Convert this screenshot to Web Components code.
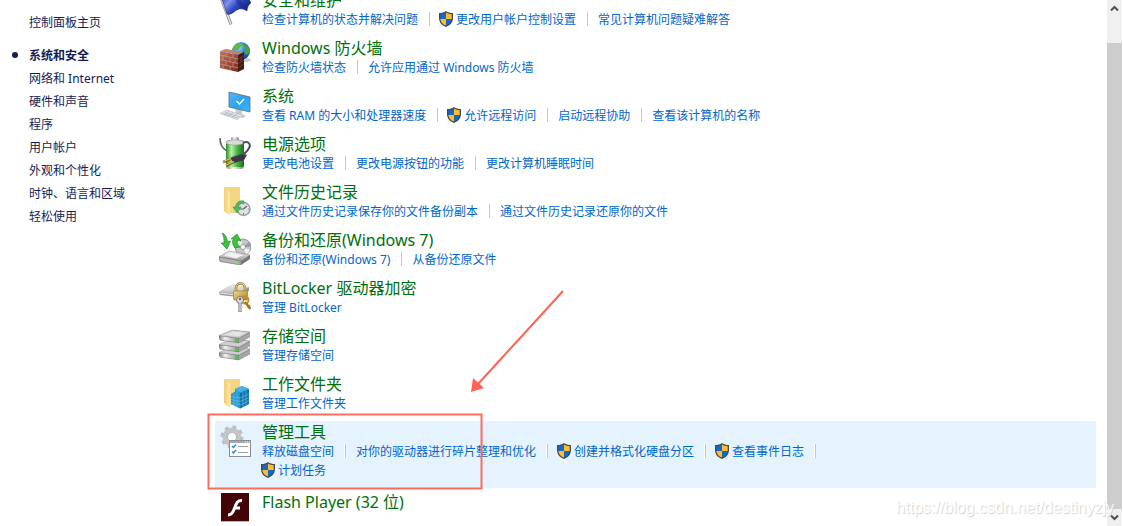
<!DOCTYPE html>
<html lang="zh-CN">
<head>
<meta charset="utf-8">
<title>系统和安全</title>
<style>
  html, body {
    height: 100%;
    margin: 0;
  }

  body {
    background: #fff;
    font-family: "Noto Sans", "Noto Sans CJK SC", sans-serif;
    font-size: 12px;
    overflow: hidden;
  }
</style>
</head>
<body>
<control-panel>
  <side-nav slot="nav">
    <nav-item>控制面板主页</nav-item>
    <nav-item slot="items" current>系统和安全</nav-item>
    <nav-item slot="items">网络和 Internet</nav-item>
    <nav-item slot="items">硬件和声音</nav-item>
    <nav-item slot="items">程序</nav-item>
    <nav-item slot="items">用户帐户</nav-item>
    <nav-item slot="items">外观和个性化</nav-item>
    <nav-item slot="items">时钟、语言和区域</nav-item>
    <nav-item slot="items">轻松使用</nav-item>
  </side-nav>

  <panel-category icon="flag">
    <span slot="heading">安全和维护</span>
    <task-link>检查计算机的状态并解决问题</task-link>
    <task-link shield>更改用户帐户控制设置</task-link>
    <task-link>常见计算机问题疑难解答</task-link>
  </panel-category>
  <panel-category icon="firewall">
    <span slot="heading">Windows 防火墙</span>
    <task-link>检查防火墙状态</task-link>
    <task-link>允许应用通过 Windows 防火墙</task-link>
  </panel-category>
  <panel-category icon="system">
    <span slot="heading">系统</span>
    <task-link>查看 RAM 的大小和处理器速度</task-link>
    <task-link shield>允许远程访问</task-link>
    <task-link>启动远程协助</task-link>
    <task-link>查看该计算机的名称</task-link>
  </panel-category>
  <panel-category icon="power">
    <span slot="heading">电源选项</span>
    <task-link>更改电池设置</task-link>
    <task-link>更改电源按钮的功能</task-link>
    <task-link>更改计算机睡眠时间</task-link>
  </panel-category>
  <panel-category icon="history">
    <span slot="heading">文件历史记录</span>
    <task-link>通过文件历史记录保存你的文件备份副本</task-link>
    <task-link>通过文件历史记录还原你的文件</task-link>
  </panel-category>
  <panel-category icon="backup">
    <span slot="heading">备份和还原(Windows 7)</span>
    <task-link>备份和还原(Windows 7)</task-link>
    <task-link>从备份还原文件</task-link>
  </panel-category>
  <panel-category icon="bitlocker">
    <span slot="heading">BitLocker 驱动器加密</span>
    <task-link>管理 BitLocker</task-link>
  </panel-category>
  <panel-category icon="storage">
    <span slot="heading">存储空间</span>
    <task-link>管理存储空间</task-link>
  </panel-category>
  <panel-category icon="work">
    <span slot="heading">工作文件夹</span>
    <task-link>管理工作文件夹</task-link>
  </panel-category>
  <panel-category icon="tools" active>
    <span slot="heading">管理工具</span>
    <task-link>释放磁盘空间</task-link>
    <task-link>对你的驱动器进行碎片整理和优化</task-link>
    <task-link shield>创建并格式化硬盘分区</task-link>
    <task-link shield>查看事件日志</task-link>
    <task-link shield>计划任务</task-link>
  </panel-category>
  <panel-category icon="flash" compact>
    <span slot="heading">Flash Player (32 位)</span>
  </panel-category>

  <scroll-bar slot="scroll"></scroll-bar>
  <callout-mark slot="overlay"></callout-mark>
  <water-mark slot="overlay">https://blog.csdn.net/destinyzjy</water-mark>
</control-panel>

<script>
// Small helper: open shadow root filled with the given markup
function attach(host, html) {
  const template = document.createElement("template");
  template.innerHTML = html;
  host.attachShadow({ mode: "open" }).appendChild(template.content.cloneNode(true));
}

const ICONS = {
  flag: `
    <defs>
      <linearGradient id="g" x1="0" x2="1" y1="0" y2="0.6">
        <stop offset="0" stop-color="#2a3aa8"/><stop offset=".35" stop-color="#7d92ee"/>
        <stop offset=".6" stop-color="#3448c2"/><stop offset="1" stop-color="#16227c"/>
      </linearGradient>
    </defs>
    <path d="M1 2 L12 31.500" stroke="#8c8c8c" stroke-width="3"/>
    <path d="M1 2 L12 31.500" stroke="#e4e4e4" stroke-width="1.400"/>
    <path d="M2 3 C9 -1 14 7 22 4 C26 3 29 4 29 5 L32 10 C30 11 28 14 28 18 C23 14 18 16 15 19 C12 21 10 22 8 21 Z" fill="url(#g)" stroke="#1b2782" stroke-width=".6"/>
    <path d="M16 6 C18 10 20 13 21 15 C24 15 25 16 27 17 C27 14 28 12 29 11 C24 11 22 9 20 5 Z" fill="#1b2a92" opacity=".5"/>`,
  firewall: `
    <defs>
      <radialGradient id="g" cx=".35" cy=".3" r=".8">
        <stop offset="0" stop-color="#b8e6ff"/><stop offset=".45" stop-color="#2e86dc"/><stop offset="1" stop-color="#0a3692"/>
      </radialGradient>
      <linearGradient id="b" x1="0" x2="1" y1="0" y2="1">
        <stop offset="0" stop-color="#c07560"/><stop offset="1" stop-color="#802a1b"/>
      </linearGradient>
    </defs>
    <ellipse cx="25" cy="19" rx="7" ry="2" fill="#ccc"/>
    <circle cx="22" cy="10" r="9" fill="url(#g)"/>
    <path d="M15 5 C17 2 21 1 24 3 C23 6 20 6 20 9 C17 9 14 9 13.500 8 Z" fill="#5cb848"/>
    <path d="M26 3 C29 5 31 8 31 11 C29 14 27 15 26 12 C25 10 27 8 25 6 Z" fill="#45a53a"/>
    <path d="M1 10 L7 8 L25 11 L19 14 Z" fill="#b98578"/>
    <path d="M1 10 L19 14 V31 L1 27 Z" fill="url(#b)"/>
    <path d="M19 14 L25 11 V28 L19 31 Z" fill="#4a1a14"/>
    <path d="M1 14 L19 18 M1 18.500 L19 22.500 M1 23 L19 27 M7 11.500 V15.500 M14 13 V17 M4 15 V19 M11 16.500 V20.500 M16 18 V22 M7 20 V24 M14 21.500 V25.500 M4 24 V28 M11 25 V29" stroke="#c99b8f" stroke-width=".7"/>
    <path d="M19 18 L25 15 M19 22.500 L25 19 M19 27 L25 23 M22 16.500 V20.500" stroke="#7b463e" stroke-width=".6"/>`,
  system: `
    <defs>
      <linearGradient id="g" x1="0" x2="1" y1="0" y2="1">
        <stop offset="0" stop-color="#58b8f4"/><stop offset=".5" stop-color="#2da3ee"/><stop offset="1" stop-color="#3db4fc"/>
      </linearGradient>
    </defs>
    <path d="M16 19 L23 21 V25 L27 27 L24 29 L13 25.500 L17 24 Z" fill="#c5cbd0"/>
    <path d="M10 3 L31 8 V23 L10 18 Z" fill="url(#g)" stroke="#5b6b77" stroke-width=".8"/>
    <path d="M17.500 12 L20.500 15 L25 10" fill="none" stroke="#fff" stroke-width="1.500"/>
    <path d="M1 24.500 L8 21 L24 26.500 L18 30.500 Z" fill="#e3e6e9" stroke="#afb5ba" stroke-width=".6"/>
    <path d="M4 24.500 L19 29 M6 23.300 L21 28 M5 26 L10 22 M9 27 L14 23.500 M13 28.500 L18 25" stroke="#a5abb0" stroke-width=".6"/>`,
  power: `
    <defs>
      <linearGradient id="g" x1="0" x2="1" y1="0" y2="0">
        <stop offset="0" stop-color="#2e8a2c"/><stop offset=".3" stop-color="#b5f0a4"/>
        <stop offset=".6" stop-color="#4bbb42"/><stop offset="1" stop-color="#196a1e"/>
      </linearGradient>
      <linearGradient id="m" x1="0" x2="1" y1="0" y2="0">
        <stop offset="0" stop-color="#888"/><stop offset=".4" stop-color="#fafafa"/><stop offset="1" stop-color="#858585"/>
      </linearGradient>
    </defs>
    <path d="M1 1 C1 7 4 12 8 14" fill="none" stroke="#5b6072" stroke-width="1.600"/>
    <rect x="12" y="0" width="8" height="5" rx="2" fill="url(#m)"/>
    <rect x="7" y="3" width="18" height="29" rx="3" fill="url(#m)"/>
    <rect x="7" y="6" width="18" height="24" rx="2" fill="url(#g)"/>
    <ellipse cx="16" cy="5.500" rx="9" ry="2.600" fill="#d8dcd8" stroke="#979d97" stroke-width=".6"/>
    <path d="M24 6 C30 3 32 8 30 11 C29 14 26 16 24 18" fill="none" stroke="#464c60" stroke-width="2"/>
    <path d="M11 21 L23 16 L28 18 L25 23 L15 26 Z" fill="#363940"/>
    <path d="M12 20.500 L23 16.500 L27 18" fill="none" stroke="#777c86" stroke-width=".8"/>
    <path d="M12 22 L4 25 M15 25 L7 28.500" stroke="#8a611b" stroke-width="2.600"/>
    <path d="M12 21.500 L4 24.500 M15 24.500 L7 28" stroke="#e7c777" stroke-width="1.200"/>`,
  history: `
    <defs>
      <linearGradient id="f" x1="0" x2="1" y1="0" y2="0">
        <stop offset="0" stop-color="#f3ce74"/><stop offset="1" stop-color="#fde9ae"/>
      </linearGradient>
    </defs>
    <path d="M5 2 H21 V28 H9 L5 25 Z" fill="#f4d685"/>
    <path d="M11 7 V31 L5 26 V2 Z" fill="url(#f)"/>
    <circle cx="24.500" cy="24" r="6.500" fill="#dfe1e2" stroke="#9a9ea0" stroke-width="1.400"/>
    <path d="M24.500 24 L28 21 M24.500 24 H20.500" stroke="#606468" stroke-width="1.200"/>
    <path d="M24.500 18.500 V19.500 M24.500 28 V29.500 M29 24 H30" stroke="#777"/>
    <path d="M25 16 C20 15 17 18 16.500 22 H14 L18 28 L22 22 H19.500 C20 19.500 21.500 18 25 18 Z" fill="#4fbb5c" stroke="#24883a" stroke-width=".5"/>`,
  backup: `
    <defs>
      <linearGradient id="g" x1="0" x2="0" y1="0" y2="1">
        <stop offset="0" stop-color="#f5f5f5"/><stop offset="1" stop-color="#9a9a9a"/>
      </linearGradient>
    </defs>
    <circle cx="24" cy="14" r="8" fill="#c4c4c9" stroke="#85858a" stroke-width=".8"/>
    <path d="M24 14 L17 10 A8 8 0 0 1 22 6.500 Z M24 14 L31 17 A8 8 0 0 1 27 21.500 Z" fill="#f2f2f2"/>
    <path d="M24 14 L30 9 A8 8 0 0 1 32 14 Z" fill="#9b9da4"/>
    <circle cx="24" cy="14" r="2.500" fill="#fff" stroke="#888" stroke-width=".8"/>
    <path d="M0 24 L10 18 L31 22 L22 28 Z" fill="url(#g)" stroke="#8a8a8a" stroke-width=".6"/>
    <path d="M0 24 L22 28 V32 L1 28.500 Z" fill="#b5b5b5" stroke="#666" stroke-width=".6"/>
    <path d="M22 28 L31 22 V26 L22 32 Z" fill="#777"/>
    <path d="M5 22.500 L12 19.500 L24 22 L17 25.500 Z" fill="#f2f2f2"/>
    <circle cx="20" cy="29.500" r="1" fill="#44dc30"/>
    <path d="M3 0 C6 1 8 4 8.500 9 L11.500 8 L8 16 L2 10 L5 10 C5 6 5 3 3 0 Z" fill="#3bc43a" stroke="#137f1c" stroke-width=".6"/>
    <path d="M16 15 C13 11 13 8 14.500 5.500 L12 6 L18 1 L22 8 L19 7 C17.500 9 18 12 21 14 Z" fill="#3bc43a" stroke="#137f1c" stroke-width=".6"/>`,
  bitlocker: `
    <defs>
      <linearGradient id="g" x1="0" x2="0" y1="0" y2="1">
        <stop offset="0" stop-color="#ededed"/><stop offset="1" stop-color="#b9b9b9"/>
      </linearGradient>
      <linearGradient id="k" x1="0" x2="1" y1="0" y2="1">
        <stop offset="0" stop-color="#f4dd8c"/><stop offset="1" stop-color="#b07c16"/>
      </linearGradient>
    </defs>
    <path d="M0 11 L12 4 L30 6 V10 L19 16 L1 14 Z" fill="#969696"/>
    <path d="M0 11 L12 4 L30 6 L19 13 Z" fill="url(#g)"/>
    <path d="M1 12 L17 14" stroke="#efefef"/>
    <path d="M17 11 V7 C17 1 26 1 26 7 V11" fill="none" stroke="#8f6a1d" stroke-width="2.600"/>
    <path d="M17 11 V7 C17 1 26 1 26 7 V11" fill="none" stroke="#eed98f" stroke-width="1.200"/>
    <rect x="14.500" y="10" width="14" height="9" rx="1" fill="url(#k)" stroke="#93701e" stroke-width=".6"/>
    <circle cx="26" cy="19" r="3.500" fill="none" stroke="#c49428" stroke-width="2"/>
    <path d="M26 21 L31.500 28 M28.500 26.500 L31 24.500" stroke="#a77618" stroke-width="2.400"/>
    <circle cx="21" cy="19" r="3.500" fill="#ddd" stroke="#777"/>
    <circle cx="21" cy="18" r="1.200" fill="#666"/>
    <path d="M21 22 V31" stroke="#777" stroke-width="3.200"/>
    <path d="M21 22 V30.500 M22 26 H24 M22 29 H23.500" stroke="#dadada" stroke-width="1.400"/>`,
  storage: `
    <defs>
      <linearGradient id="g" x1="0" x2="1" y1="0" y2="0">
        <stop offset="0" stop-color="#7d7d7d"/><stop offset=".3" stop-color="#f2f2f2"/><stop offset="1" stop-color="#8c8c8c"/>
      </linearGradient>
      <g id="d">
        <path d="M0 6 L13 0 L31 2 V7 L20 13 L1 10 Z" fill="#686868"/>
        <path d="M0 5.500 L20 8.500 V13 L1 10 Z" fill="url(#g)" stroke="#7b7b7b" stroke-width=".5"/>
        <path d="M0 5.500 L13 0 L31 2 L20 8 Z" fill="#d0d0d0" stroke="#999" stroke-width=".5"/>
        <path d="M20 8.500 L31 2.500 V7 L20 13 Z" fill="#a6a6a6"/>
        <rect x="16" y="9" width="2" height="3" fill="#3fd22e"/>
      </g>
    </defs>
    <use href="#d" y="18"/>
    <use href="#d" y="10"/>
    <use href="#d" y="1"/>
    <path d="M6 6 L14 2.500 L26 4 L19 7 Z" fill="#e6e6e6"/>`,
  work: `
    <defs>
      <linearGradient id="f" x1="0" x2="1" y1="0" y2="0">
        <stop offset="0" stop-color="#f2cc6f"/><stop offset="1" stop-color="#fde9ae"/>
      </linearGradient>
    </defs>
    <path d="M5 2 H21 V28 H9 L5 25 Z" fill="#f5d684"/>
    <path d="M11 7 V31 L5 26 V2 Z" fill="url(#f)"/>
    <path d="M12 17 L16 14.500 V12 L23 9 L30 12 V27 L21 31.500 L12 27 Z" fill="#2397d4"/>
    <path d="M21 16 L30 12 V27 L21 31.500 Z" fill="#1172ad"/>
    <path d="M16 12 L23 9 L30 12 L21 15.500 Z" fill="#4bb0e2"/>
    <path d="M12 19.500 L21 21 L30 17 M12 22.500 L21 24.500 L30 20.500 M12 25 L21 28 L30 24 M15 16 V28 M18 14 V30 M24 15 V30 M27 14 V28" fill="none" stroke="#6cc2ea" stroke-width=".6"/>`,
  tools: `
    <circle cx="13" cy="12" r="7" fill="none" stroke="#c3c6c9" stroke-width="5"/>
    <circle cx="13" cy="12" r="10" fill="none" stroke="#bcbfc3" stroke-width="3" stroke-dasharray="4 3.854"/>
    <circle cx="13" cy="12" r="4.500" fill="#fff" stroke="#a6aaae" stroke-width=".8"/>
    <rect x="10.500" y="15.500" width="21" height="16" fill="#fff" stroke="#8b8f93"/>
    <path d="M11 17 H31" stroke="#a6aaae" stroke-width="2"/>
    <path d="M26 17 H27 M28 17 H29 M30 17 H31" stroke="#fff"/>
    <path d="M13 21 L14.500 22.500 L17 19.500 M13 26.500 L14.500 28 L17 25" fill="none" stroke="#2384d6" stroke-width="1.400"/>
    <path d="M19 21.500 H29 M19 27.500 H29" stroke="#9b9fa3"/>`,
  flash: `
    <rect x="2" y="2" width="28" height="28" fill="#bbb"/>
    <rect x="2" y="1" width="28" height="28" fill="#420405"/>
    <path d="M23 8.500 C17.500 8 17 13 15 17.500 C13.500 21.500 12 23 9 23" fill="none" stroke="#fff" stroke-width="3"/>
    <path d="M15 16 H21" stroke="#fff" stroke-width="3"/>`
};

class PanelIcon extends HTMLElement {
  connectedCallback() {
    attach(this, `
      <style>
        :host { display: block; width: 32px; height: 32px; }
        svg { display: block; }
      </style>
      <svg width="32" height="32" viewBox="0 0 32 32" fill="none" aria-hidden="true">${ICONS[this.getAttribute("name")]}</svg>
    `);
  }
}

class TaskLink extends HTMLElement {
  connectedCallback() {
    const shield = `
      <svg width="16" height="16" viewBox="0 0 16 16" aria-hidden="true">
        <path d="M7 0 C9 1.500 11 2 14 2 V7 C14 11.500 11 14.500 7 16 C3 14.500 0 11.500 0 7 V2 C3 2 5 1.500 7 0 Z" fill="#46494d"/>
        <path d="M7 1.500 V8 H1.300 V3.200 C3.500 3 5.300 2.600 7 1.500 Z M7 8 H12.600 C12.300 11 10.500 13.300 7 14.600 Z" fill="#1368c8"/>
        <path d="M7 1.500 C8.700 2.600 10.500 3 12.700 3.200 V8 H7 Z M7 8 V14.600 C3.500 13.300 1.700 11 1.300 8 Z" fill="#ffbd2e"/>
      </svg>`;
    attach(this, `
      <style>
        :host {
          display: flex;
          align-items: center;
          height: 19px;
          white-space: nowrap;
        }
        :host(:not(:last-of-type))::after {
          content: "";
          width: 1px;
          height: 14px;
          margin: 0 10px 0 11px;
          background: #c6c6c6;
          box-shadow: -1px 0 #fff;
        }
        svg { margin: 0 1px 0 -1px; }
        a {
          display: flex;
          align-items: center;
          color: #0066cc;
          text-decoration: none;
        }
        a:hover { text-decoration: underline; }
      </style>
      <a href="#">${this.hasAttribute("shield") ? shield : ""}<slot></slot></a>
    `);
  }
}

class PanelCategory extends HTMLElement {
  connectedCallback() {
    attach(this, `
      <style>
        :host {
          display: flex;
          gap: 11px;
          padding: 1px 4px 9px;
        }
        :host([active]) { background: #e5f3ff; }
        :host([compact]) .text { padding-top: 3px; }
        panel-icon {
          flex: none;
          margin-top: 3px;
        }
        .text { min-width: 0; }
        h2 {
          height: 19px;
          margin: 0;
          font-size: 16px;
          font-weight: 400;
          line-height: 20px;
        }
        h2 a {
          color: #006f0d;
          text-decoration: none;
        }
        .tasks {
          display: flex;
          flex-wrap: wrap;
          max-width: 600px;
        }
      </style>
      <panel-icon name="${this.getAttribute("icon")}"></panel-icon>
      <div class="text">
        <h2><a href="#"><slot name="heading"></slot></a></h2>
        <div class="tasks"><slot></slot></div>
      </div>
    `);
  }
}

class NavItem extends HTMLElement {
  connectedCallback() {
    attach(this, `
      <style>
        :host {
          display: flex;
          align-items: center;
          height: 23px;
        }
        .dot {
          width: 6px;
          height: 6px;
          margin: 0 11px 0 12px;
          border-radius: 50%;
        }
        a {
          color: #151c55;
          text-decoration: none;
        }
        :host([current]) .dot { background: #151c55; }
        :host([current]) a { font-weight: 700; }
      </style>
      <span class="dot"></span>
      <a href="#"><slot></slot></a>
    `);
  }
}

class SideNav extends HTMLElement {
  connectedCallback() {
    attach(this, `
      <style>
        :host {
          display: block;
          padding-top: 10px;
        }
        .items { margin-top: 10px; }
      </style>
      <nav>
        <slot></slot>
        <div class="items"><slot name="items"></slot></div>
      </nav>
    `);
  }
}

class ScrollBar extends HTMLElement {
  connectedCallback() {
    attach(this, `
      <style>
        :host {
          display: flex;
          flex-direction: column;
          width: 15px;
          margin-right: 1px;
          background: #f0f0f0;
        }
        button {
          display: flex;
          align-items: center;
          justify-content: center;
          height: 17px;
          padding: 0;
          border: 0;
          background: none;
        }
        .track {
          flex: 1;
          display: flex;
          padding-top: 26px;
        }
        .thumb {
          flex: 1;
          background: #cdcdcd;
        }
      </style>
      <button type="button" aria-label="向上滚动"><svg width="9" height="7" viewBox="0 0 9 7"><path d="M1 5.500 L4.500 2 L8 5.500" fill="none" stroke="#505050" stroke-width="2"/></svg></button>
      <div class="track"><div class="thumb"></div></div>
      <button type="button" aria-label="向下滚动"><svg width="9" height="7" viewBox="0 0 9 7"><path d="M1 1.500 L4.500 5 L8 1.500" fill="none" stroke="#505050" stroke-width="2"/></svg></button>
    `);
  }
}

// Red frame and arrow drawn over the list
class CalloutMark extends HTMLElement {
  connectedCallback() {
    attach(this, `
      <style>
        :host {
          position: absolute;
          left: 207px;
          top: 289px;
          pointer-events: none;
        }
        svg { display: block; }
      </style>
      <svg width="358" height="202" viewBox="0 0 358 202" fill="none" aria-hidden="true">
        <rect x="1.500" y="125.500" width="273" height="74" stroke="#fa6c60" stroke-width="2"/>
        <path d="M356 2 L271 95" stroke="#ff6152" stroke-width="2"/>
        <path d="M264 103 L266 89 L277 99 Z" fill="#ff6152"/>
      </svg>
    `);
  }
}

class WaterMark extends HTMLElement {
  connectedCallback() {
    attach(this, `
      <style>
        :host {
          position: absolute;
          right: 9px;
          bottom: 8px;
          color: #fff;
          font: 16px/20px "Liberation Sans", Arial, sans-serif;
          text-shadow: 1px 1px 1px #c8c8c8;
          opacity: .8;
          pointer-events: none;
        }
      </style>
      <slot></slot>
    `);
  }
}

class ControlPanel extends HTMLElement {
  connectedCallback() {
    attach(this, `
      <style>
        :host {
          display: grid;
          grid-template-columns: 215px 1fr auto;
          grid-template-rows: 100%;
          position: relative;
          height: 100vh;
          overflow: hidden;
        }
        /* list is scrolled a few pixels down */
        main {
          margin: -11px 11px 0 0;
          min-width: 0;
        }
      </style>
      <slot name="nav"></slot>
      <main><slot></slot></main>
      <slot name="scroll"></slot>
      <slot name="overlay"></slot>
    `);
  }
}

customElements.define("panel-icon", PanelIcon);
customElements.define("task-link", TaskLink);
customElements.define("panel-category", PanelCategory);
customElements.define("nav-item", NavItem);
customElements.define("side-nav", SideNav);
customElements.define("scroll-bar", ScrollBar);
customElements.define("callout-mark", CalloutMark);
customElements.define("water-mark", WaterMark);
customElements.define("control-panel", ControlPanel);
</script>
</body>
</html>
